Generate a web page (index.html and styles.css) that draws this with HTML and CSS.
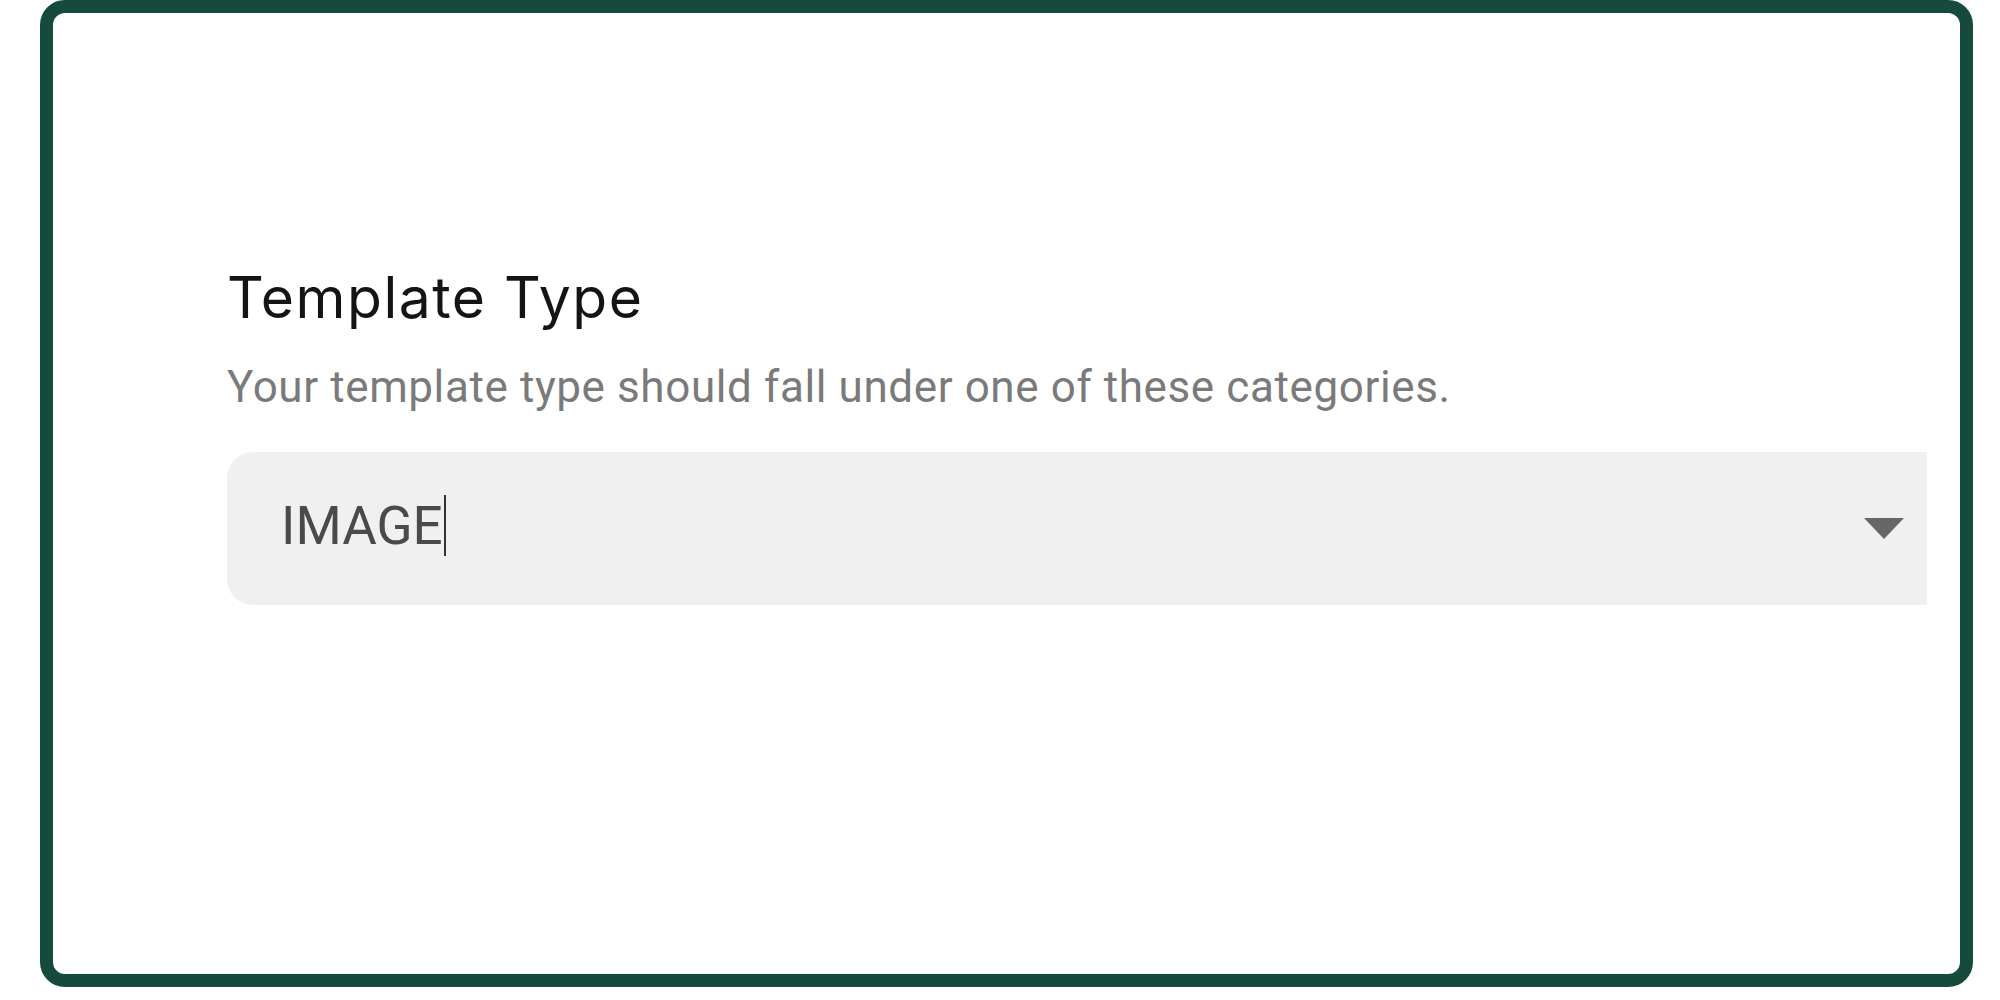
FILE: index.html
```html
<!DOCTYPE html>
<html lang="en">
<head>
  <meta charset="UTF-8">
  <title>Template Type</title>
  <link rel="stylesheet" href="styles.css">
</head>
<body>

<div class="frame">
  <div class="field-group">
    <h2 class="field-title">Template Type</h2>
    <p class="field-hint">Your template type should fall under one of these categories.</p>
    <div class="select">
      <span class="select-value">IMAGE</span><span class="caret"></span>
      <svg class="select-arrow" width="40" height="21" viewBox="0 0 40 21">
        <polygon points="0,0 40,0 20,21" fill="#666"/>
      </svg>
    </div>
  </div>
</div>

</body>
</html>
```

FILE: styles.css
```css
* {
  padding: 0;
  margin: 0;
  box-sizing: border-box;
}
body {
  background: #fff;
}
.frame {
  width: 1933px;
  height: 987px;
  margin-left: 40px;
  border: 13px solid #154a3c;
  border-radius: 25px;
  padding: 251px 33px 0 174px;
}
.field-title {
  font-family: Inter, "Liberation Sans", sans-serif;
  font-weight: 400;
  font-size: 57px;
  line-height: 68px;
  letter-spacing: 1.5px;
  color: #141414;
}
.field-hint {
  margin-top: 29px;
  font-family: Roboto, "Liberation Sans", sans-serif;
  font-size: 44px;
  line-height: 52px;
  letter-spacing: 0.6px;
  color: #7a7a7a;
}
.select {
  margin-top: 39px;
  height: 153px;
  background: #f0f0f0;
  border-radius: 26px 0 0 26px;
  display: flex;
  align-items: center;
  padding: 0 23px 6px 54px;
}
.select-value {
  font-family: Roboto, "Liberation Sans", sans-serif;
  font-size: 53px;
  line-height: 60px;
  color: #4a4a4a;
}
.caret {
  width: 2px;
  height: 61px;
  margin-left: 1px;
  background: #333;
}
.select-arrow {
  margin-left: auto;
  margin-top: 6px;
}
```
